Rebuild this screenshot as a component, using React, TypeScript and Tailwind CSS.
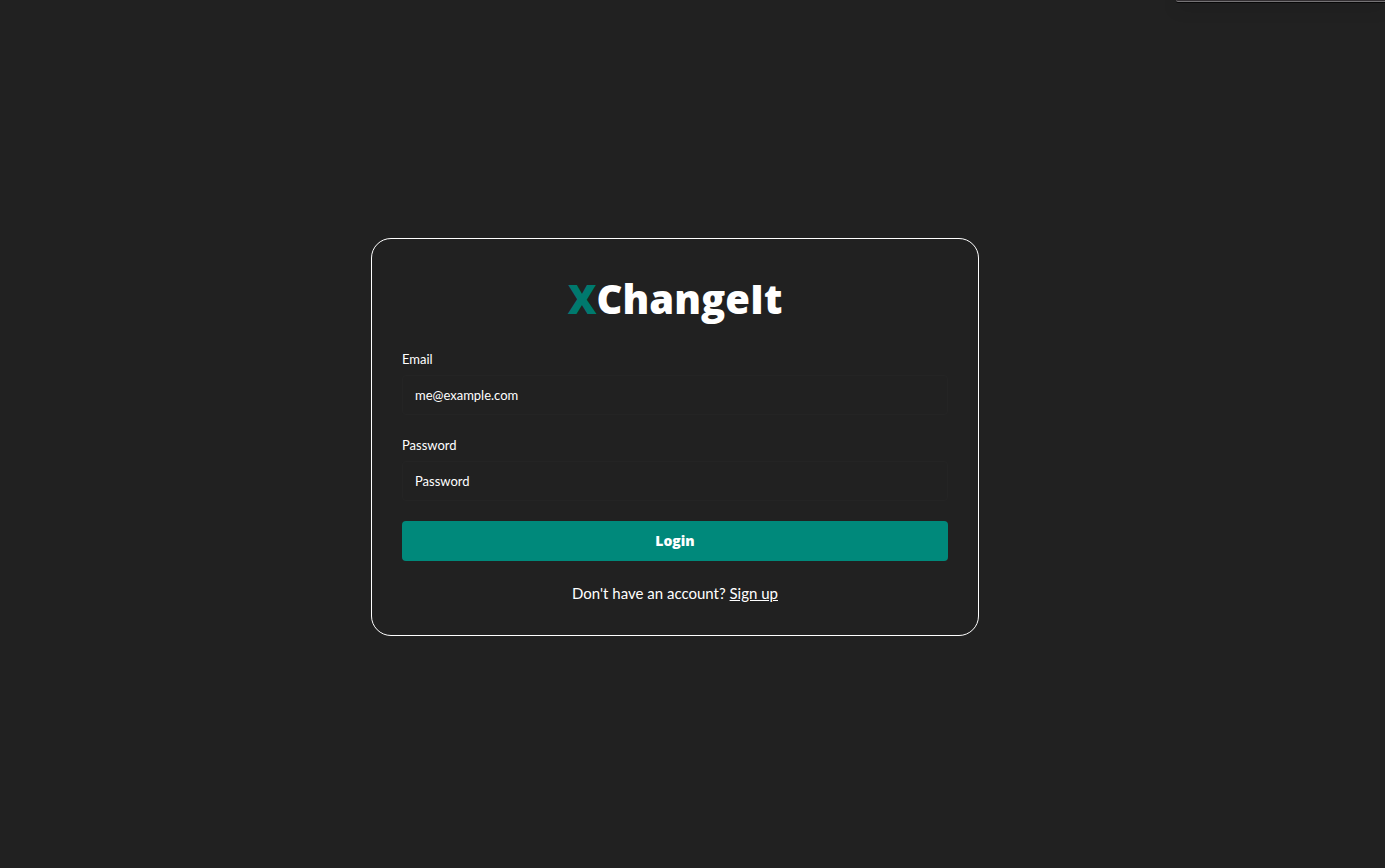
import { useState } from "react";

interface FieldProps {
  id: string;
  label: string;
  type: string;
  placeholder: string;
  value: string;
  onChange: (value: string) => void;
}

function Field({ id, label, type, placeholder, value, onChange }: FieldProps) {
  return (
    <div className="mb-5">
      <label htmlFor={id} className="mb-1.5 block text-[13px] leading-5">
        {label}
      </label>
      <input
        id={id}
        type={type}
        placeholder={placeholder}
        value={value}
        onChange={(event) => onChange(event.target.value)}
        className="block h-10 w-full rounded border border-[#242424] bg-transparent px-3 text-[13px] text-white outline-none placeholder:text-white"
      />
    </div>
  );
}

export default function App() {
  const [email, setEmail] = useState("");
  const [password, setPassword] = useState("");

  return (
    <main className="relative flex min-h-screen items-center justify-center overflow-hidden bg-[#212121] pt-1.5 pr-[35px] font-['Lato',sans-serif] text-white">
      <div className="absolute top-0 right-0 h-0.5 w-[209px] rounded-bl-lg border-b border-[#757375] bg-[#332f32] shadow-[0_1px_0_#080808,0_4px_16px_rgba(0,0,0,0.45)]" />
      <form
        onSubmit={(event) => event.preventDefault()}
        className="w-full max-w-[608px] rounded-[20px] border border-white p-[30px]"
      >
        <h1 className="mb-5 text-center font-['Open_Sans',sans-serif] text-[40px] leading-[60px] font-extrabold">
          <span className="text-[#00796e]">X</span>ChangeIt
        </h1>
        <Field
          id="email"
          label="Email"
          type="email"
          placeholder="me@example.com"
          value={email}
          onChange={setEmail}
        />
        <Field
          id="password"
          label="Password"
          type="password"
          placeholder="Password"
          value={password}
          onChange={setPassword}
        />
        <button
          type="submit"
          className="mb-5 block h-10 w-full rounded bg-[#00897b] font-['Open_Sans',sans-serif] text-sm font-extrabold"
        >
          Login
        </button>
        <p className="text-center text-[15px] leading-6">
          Don't have an account?{" "}
          <a href="#signup" className="underline">
            Sign up
          </a>
        </p>
      </form>
    </main>
  );
}
